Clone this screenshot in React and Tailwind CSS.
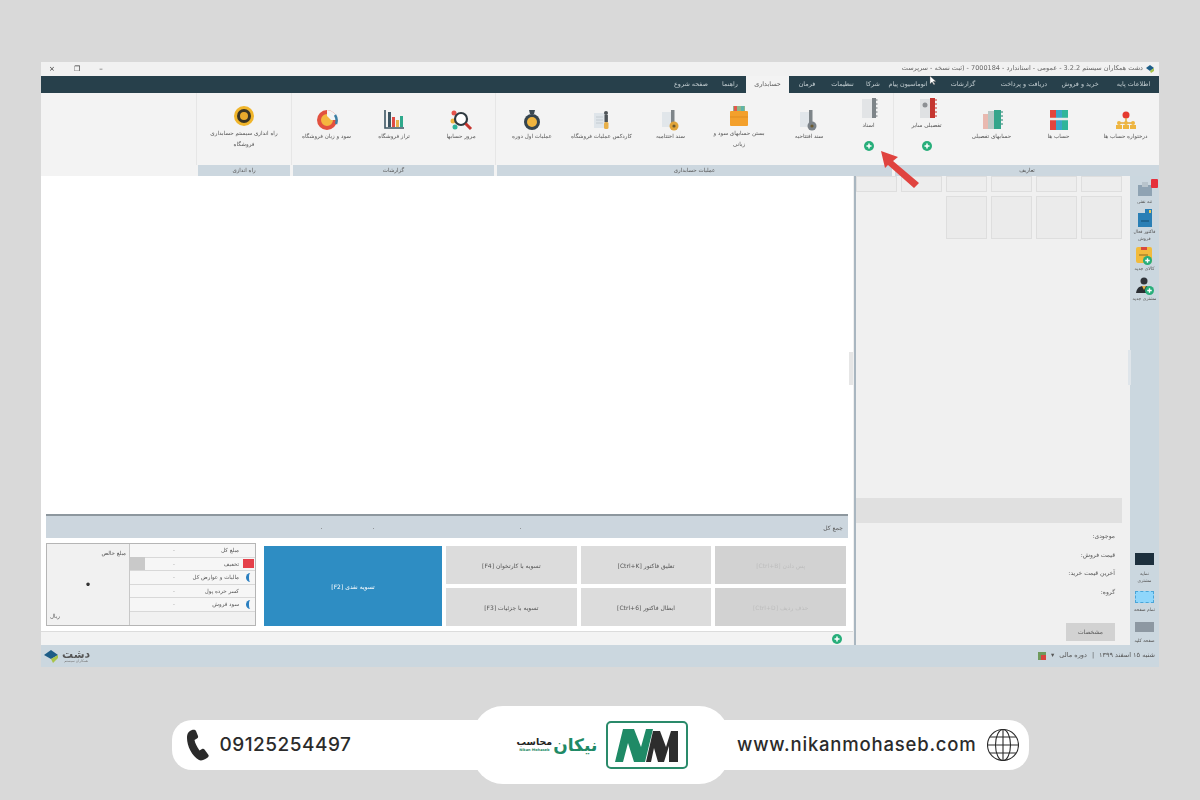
import { Fragment } from 'react';

const NAV_ITEMS = [
  { label: 'اطلاعات پایه', className: 'w-[51px]' },
  { label: 'خرید و فروش', className: 'w-[56px]' },
  { label: 'دریافت و پرداخت', className: 'w-[56px]' },
  { label: 'گزارشات', className: 'w-[66px]' },
  { label: 'اتوماسیون پیام', className: 'w-[44px]' },
  { label: 'شرکا', className: 'w-[26px]' },
  { label: 'تنظیمات', className: 'w-[35px]' },
  { label: 'فرمان', className: 'w-[36px]' },
];

const Plus = ({ className }) => (
  <svg viewBox="0 0 10 10" className={className}>
    <circle cx="5" cy="5" r="5" fill="#27ae7a" />
    <path d="M2.5 5h5M5 2.5v5" stroke="#fff" strokeWidth="1.5" />
  </svg>
);

const Svg = ({ children, w = 24, h = 22 }) => (
  <svg viewBox="0 0 24 22" width={w} height={h}>{children}</svg>
);

const OrgIcon = () => (
  <Svg>
    <circle cx="12" cy="6" r="3.5" fill="#e5392f" />
    <path d="M12 9v5M5 14h14" stroke="#e2a83c" strokeWidth="1.5" />
    <circle cx="5" cy="14" r="2" fill="#eeb540" /><circle cx="12" cy="14" r="2" fill="#eeb540" /><circle cx="19" cy="14" r="2" fill="#eeb540" />
    <rect x="2" y="16" width="6" height="4" fill="#eeb540" /><rect x="9" y="16" width="6" height="4" fill="#eeb540" /><rect x="16" y="16" width="6" height="4" fill="#eeb540" />
  </Svg>
);
const BindersIcon = () => (
  <Svg>
    <rect x="3" y="1" width="6" height="20" fill="#e2443d" /><rect x="9" y="1" width="6" height="20" fill="#3aa7c9" /><rect x="15" y="1" width="6" height="20" fill="#2fb59a" />
    <path d="M3 10h18" stroke="#eaeaea" strokeWidth="2.5" />
  </Svg>
);
const DetailIcon = () => (
  <Svg>
    <rect x="3" y="5" width="6" height="15" fill="#e9b9b0" /><rect x="8" y="2" width="7" height="18" fill="#b9c9c6" /><rect x="14" y="1" width="7" height="19" fill="#35a58b" />
    <path d="M21 3h2M21 7h2M21 11h2M21 15h2" stroke="#1f7f6a" strokeWidth="1.2" />
  </Svg>
);
const LedgerIcon = () => (
  <Svg>
    <rect x="5" y="1" width="11" height="19" fill="#dfe1e3" /><circle cx="10" cy="7" r="2.5" fill="#8d9094" />
    <rect x="15" y="0" width="5" height="20" fill="#c5352f" />
    <path d="M20 2h2M20 6h2M20 10h2M20 14h2M20 18h2" stroke="#c5352f" strokeWidth="1.2" />
  </Svg>
);
const DocsIcon = () => (
  <Svg>
    <rect x="5" y="1" width="10" height="19" fill="#e2e4e6" /><rect x="15" y="0" width="4" height="20" fill="#7d8488" />
    <path d="M19 2h1.5M19 6h1.5M19 10h1.5M19 14h1.5M19 18h1.5" stroke="#6d7478" strokeWidth="1.2" />
  </Svg>
);
const ThermoIcon = ({ color }) => (
  <Svg>
    <rect x="3" y="3" width="10" height="15" fill="#e1e6ea" /><rect x="12" y="1" width="3.5" height="15" fill="#7e8589" />
    <circle cx="15" cy="17" r="4.5" fill={color} /><circle cx="15" cy="17" r="1.6" fill="#6b5a30" />
  </Svg>
);
const BoxIcon = () => (
  <Svg>
    <rect x="6" y="1" width="12" height="7" fill="#8fb68a" /><rect x="7" y="1" width="3" height="5" fill="#e2584c" /><rect x="14" y="1" width="3" height="5" fill="#5fb4a8" />
    <rect x="3" y="6" width="18" height="15" rx="1" fill="#f3a02c" />
    <path d="M3 12h18" stroke="#df8d20" />
  </Svg>
);
const PersonDocIcon = () => (
  <Svg>
    <rect x="4" y="4" width="11" height="15" fill="#dfe5ea" />
    <path d="M6 8h7M6 11h7M6 14h7" stroke="#c4ccd2" />
    <circle cx="16" cy="4" r="2" fill="#4d5357" /><rect x="14.5" y="6" width="3.4" height="7" fill="#4d5357" /><rect x="14" y="13" width="4.5" height="7" rx="1.5" fill="#e8b04a" />
  </Svg>
);
const MedalIcon = () => (
  <Svg>
    <path d="M9 1h6l-1 4h-4z" fill="#3c4a54" />
    <circle cx="12" cy="13" r="8" fill="#35444e" /><circle cx="12" cy="13" r="5" fill="#efb43f" />
  </Svg>
);
const SearchIcon = () => (
  <Svg>
    <circle cx="5" cy="4" r="2.5" fill="#e5534b" /><circle cx="4" cy="12" r="2.5" fill="#efb43f" /><circle cx="6" cy="18" r="2.5" fill="#2fb59a" />
    <circle cx="12" cy="10" r="6" fill="#fff" stroke="#2f3a40" strokeWidth="2.2" />
    <path d="M16.5 14.5 22 20" stroke="#c5352f" strokeWidth="3" />
  </Svg>
);
const BarsIcon = () => (
  <Svg>
    <path d="M3 1v18h19" stroke="#3d5663" strokeWidth="1.6" fill="none" />
    <rect x="6" y="3" width="3" height="15" fill="#3d5663" /><rect x="10" y="8" width="3" height="10" fill="#df4a44" /><rect x="14" y="11" width="3" height="7" fill="#e8b04a" /><rect x="18" y="7" width="3" height="11" fill="#2fa98c" />
  </Svg>
);
const DonutIcon = () => (
  <Svg>
    <circle cx="12" cy="11" r="8" fill="#f4b63f" stroke="#e2513f" strokeWidth="4" />
    <path d="M12 1a10 10 0 0 1 10 10h-6l-4-4z" fill="#f4f4f4" />
    <path d="M20 6a10 10 0 0 1 1 9" stroke="#3c7ea3" strokeWidth="2.5" fill="none" />
  </Svg>
);
const GearIcon = () => (
  <Svg>
    <circle cx="12" cy="11" r="10" fill="#f0b52b" /><circle cx="12" cy="11" r="7" fill="#3a3424" /><circle cx="12" cy="11" r="4" fill="#e8a92d" />
  </Svg>
);

const GROUPS = [
  {
    title: 'تعاریف', className: 'w-[264px]',
    items: [
      { label: 'درختواره حساب ها', Icon: OrgIcon, className: 'w-[67px] pt-[16px]' },
      { label: 'حساب ها', Icon: BindersIcon, className: 'w-[67px] pt-[16px]' },
      { label: 'حسابهای تفصیلی', Icon: DetailIcon, className: 'w-[67px] pt-[16px]' },
      { label: 'تفصیلی سایر', Icon: LedgerIcon, plus: true, className: 'w-[63px] pt-[5px]' },
    ],
  },
  {
    title: 'عملیات حسابداری', className: 'w-[395px]',
    items: [
      { label: 'اسناد', Icon: DocsIcon, plus: true, className: 'w-[47px] pt-[5px]' },
      { label: 'سند افتتاحیه', Icon: () => <ThermoIcon color="#7b8288" />, className: 'w-[72px] pt-[16px]' },
      { label: 'بستن حسابهای سود و زیانی', Icon: BoxIcon, className: 'w-[68px] pt-[12px]', labelClass: 'max-w-[56px] leading-[11px]' },
      { label: 'سند اختتامیه', Icon: () => <ThermoIcon color="#e0a43a" />, className: 'w-[69px] pt-[16px]' },
      { label: 'کاردکس عملیات فروشگاه', Icon: PersonDocIcon, className: 'w-[69px] pt-[16px]' },
      { label: 'عملیات اول دوره', Icon: MedalIcon, className: 'w-[70px] pt-[16px]' },
    ],
  },
  {
    title: 'گزارشات', className: 'w-[201px]',
    items: [
      { label: 'مرور حسابها', Icon: SearchIcon, className: 'w-[66px] pt-[16px]' },
      { label: 'تراز فروشگاه', Icon: BarsIcon, className: 'w-[68px] pt-[16px]' },
      { label: 'سود و زیان فروشگاه', Icon: DonutIcon, className: 'w-[67px] pt-[16px]' },
    ],
  },
  {
    title: 'راه اندازی', className: 'w-[92px]',
    items: [
      { label: 'راه اندازی سیستم حسابداری فروشگاه', Icon: GearIcon, className: 'w-[92px] pt-[12px]', labelClass: 'max-w-[76px] leading-[11px]' },
    ],
  },
];

function RibbonGroup({ group }) {
  return (
    <div className={`flex flex-col ${group.className}`}>
      <div className="flex h-[72px]">
        {group.items.map(({ label, Icon, plus, className, labelClass = 'leading-[9px]' }) => (
          <div key={label} className={`relative flex flex-col items-center ${className}`}>
            <Icon />
            <div className={`mt-[1px] px-[1px] text-center text-[5.6px] text-[#555] ${labelClass}`}>{label}</div>
            {plus && <Plus className="absolute top-[48px] h-[10px] w-[10px]" />}
          </div>
        ))}
      </div>
      <div className="flex h-[11px] items-center justify-center bg-[#ccd7df] text-[5.5px] text-[#555]">{group.title}</div>
    </div>
  );
}

const SUMMARY_ROWS = [
  { label: 'مبلغ کل' },
  { label: 'تخفیف', mark: 'red' },
  { label: 'مالیات و عوارض کل', mark: 'blue' },
  { label: 'کسر خرده پول' },
  { label: 'سود فروش', mark: 'blue' },
];

function SummaryBox() {
  return (
    <div dir="rtl" className="flex h-[83px] w-[210px] border border-[#b5b5b5] bg-[#f1f1f1]">
      <div className="flex w-[126px] flex-col border-l border-[#c8c8c8]">
        {SUMMARY_ROWS.map((row) => (
          <div key={row.label} className="flex h-[13.5px] items-center border-b border-[#d8d8d8] bg-white/40 text-[5.5px] text-[#555]">
            <div className="flex w-[13px] justify-center">
              {row.mark === 'red' && <span className="h-[9px] w-[11px] bg-[#e5404a]" />}
              {row.mark === 'blue' && <span className="h-[9px] w-[5px] rounded-l-full border-l-[3px] border-[#2a7fc0]" />}
            </div>
            <div className="w-[55px] truncate pr-[3px] text-right">{row.label}</div>
            <div className="w-[26px] text-center text-[#333]">۰</div>
            {row.mark === 'red' && <div className="mr-auto h-[13px] w-[15px] bg-[#c9c9c9]" />}
          </div>
        ))}
      </div>
      <div className="flex flex-1 flex-col justify-between px-[3px] py-[5px] text-[5.5px] text-[#555]">
        <div>مبلغ خالص</div>
        <div className="text-center text-[12px] leading-none text-[#333]">•</div>
        <div className="text-left">ریال</div>
      </div>
    </div>
  );
}

const ACTIONS = [
  { label: 'تسویه با کارتخوان [F4]' },
  { label: 'تعلیق فاکتور [Ctrl+K]' },
  { label: 'پس دادن [Ctrl+B]', faint: true },
  { label: 'تسویه با جزئیات [F3]' },
  { label: 'ابطال فاکتور [Ctrl+6]' },
  { label: 'حذف ردیف [Ctrl+D]', faint: true },
];

function ActionsPanel() {
  return (
    <div className="mt-[5px] flex h-[84px] px-[5px]">
      <SummaryBox />
      <div dir="rtl" className="ml-[8px] flex flex-1 flex-row-reverse gap-[4px] pb-[1px] pt-[3px]">
        <div className="flex w-[178px] items-center justify-center bg-[#2e8dc3] text-[6px] text-white">تسویه نقدی [F2]</div>
        <div dir="ltr" className="grid flex-1 grid-cols-3 grid-rows-2 gap-[4px] pr-[2px]">
          {ACTIONS.map((action) => (
            <div
              key={action.label}
              dir="rtl"
              className={action.faint
                ? 'flex items-center justify-center bg-[#d2d2d2] text-[6px] text-[#bdbdbd]'
                : 'flex items-center justify-center bg-[#dcdcdc] text-[6px] text-[#555]'}
            >
              {action.label}
            </div>
          ))}
        </div>
      </div>
    </div>
  );
}

function LeftPane() {
  return (
    <div className="flex w-[812px] flex-col bg-white">
      <div className="relative flex-1">
        <div className="absolute right-[0px] top-[176px] h-[33px] w-[4px] bg-[#e6e6e6]" />
      </div>
      <div dir="rtl" className="mx-[5px] flex h-[24px] items-center border-t-2 border-[#8d979e] bg-[#ccd6de] px-[5px] text-[6px] text-[#555]">
        <span className="w-[321px]">جمع کل</span>
        <span className="w-[147px]">۰</span>
        <span className="w-[52px]">۰</span>
        <span>۰</span>
      </div>
      <ActionsPanel />
      <div className="mt-[4px] flex h-[14px] items-center justify-end border-t border-[#dcdcdc] bg-[#f3f3f3] pr-[11px]">
        <Plus className="h-[10px] w-[10px]" />
      </div>
    </div>
  );
}

function RightPane() {
  const topCells = [0, 1, 2, 3, 4, 5];
  return (
    <div className="relative flex w-[274px] flex-col bg-[#f0f0f0] pr-[8px]">
      <div className="grid h-[16px] grid-cols-6 gap-x-[3.5px]">
        {topCells.map((cell) => (
          <div key={cell} className="border border-[#dedede] bg-[#ededed]" />
        ))}
      </div>
      <div className="mt-[4px] grid h-[43px] grid-cols-6 gap-x-[3.5px]">
        <div className="col-span-2" />
        {[0, 1, 2, 3].map((cell) => (
          <div key={cell} className="border border-[#dedede] bg-[#ebebeb]" />
        ))}
      </div>
      <div className="mt-[259px] h-[25px] bg-[#e0e0e0]" />
      <div dir="rtl" className="mt-[8px] flex flex-col gap-[9.5px] pr-[7px] text-[6px] leading-[9px] text-[#555]">
        <div>موجودی:</div>
        <div>قیمت فروش:</div>
        <div>آخرین قیمت خرید:</div>
        <div>گروه:</div>
      </div>
      <div dir="rtl" className="mt-[27px] pr-[7px]">
        <div className="flex h-[18px] w-[49px] items-center justify-center bg-[#d2d2d2] text-[6px] text-[#555]">مشخصات</div>
      </div>
      <div className="absolute -right-[1px] top-[174px] h-[35px] w-[3px] bg-[#dfe5ea]" />
    </div>
  );
}

const SideLabel = ({ children }) => (
  <div className="mt-[1px] text-center text-[4.5px] leading-[7px] text-[#555]">{children}</div>
);

function SideBar() {
  return (
    <div className="flex w-[29px] flex-col justify-between bg-[#cbd7df] pb-[1px] pt-[3px]">
      <div className="flex flex-col items-center gap-[4px]">
        <div className="relative">
          <svg viewBox="0 0 18 18" className="h-[18px] w-[18px]">
            <rect x="2" y="6" width="14" height="11" fill="#8fa3b3" /><rect x="6" y="3" width="6" height="5" fill="#b8c4cc" />
          </svg>
          <div className="absolute -right-[4px] top-[0px] h-[9px] w-[7px] rounded-[1px] bg-[#e5303c]" />
          <SideLabel>تنه نفتی</SideLabel>
        </div>
        <div>
          <svg viewBox="0 0 18 18" className="mx-auto h-[18px] w-[18px]">
            <rect x="2" y="4" width="14" height="14" fill="#2a7fb5" /><rect x="9" y="0" width="7" height="6" fill="#2a7fb5" /><rect x="13" y="1" width="2" height="3" fill="#e8c95a" /><path d="M5 12h8" stroke="#1b5d87" strokeWidth="1.5" />
          </svg>
          <SideLabel>فاکتور فعال فروش</SideLabel>
        </div>
        <div className="relative">
          <svg viewBox="0 0 18 18" className="mx-auto h-[18px] w-[18px]">
            <rect x="1" y="1" width="16" height="16" rx="2" fill="#f2bb3c" /><rect x="6" y="1" width="6" height="3" fill="#d9493c" /><path d="M4 9h9" stroke="#8a6a22" />
          </svg>
          <Plus className="absolute right-[2px] top-[10px] h-[9px] w-[9px]" />
          <SideLabel>کالای جدید</SideLabel>
        </div>
        <div className="relative">
          <svg viewBox="0 0 18 18" className="mx-auto h-[18px] w-[18px]">
            <circle cx="9" cy="5" r="3.5" fill="#30343a" /><path d="M1 17c1-6 4-7 8-7s7 1 8 7z" fill="#2a2e33" /><path d="M7 10h4l-2 4z" fill="#e8b04a" />
          </svg>
          <Plus className="absolute right-[2px] top-[10px] h-[9px] w-[9px]" />
          <SideLabel>مشتری جدید</SideLabel>
        </div>
      </div>
      <div className="flex flex-col items-center">
        <div className="h-[12px] w-[19px] bg-[#1c2f3d]" />
        <div className="mt-[4px]"><SideLabel>نمایه<br />مشتری</SideLabel></div>
        <div className="mt-[7px] h-[12px] w-[19px] border border-dashed border-[#4aa5d8] bg-[#8fd6fb]" />
        <div className="mt-[2px]"><SideLabel>تمام صفحه</SideLabel></div>
        <div className="mt-[9px] h-[10px] w-[19px] bg-[#8d98a2]" />
        <div className="mt-[4px]"><SideLabel>صفحه کلید</SideLabel></div>
      </div>
    </div>
  );
}

function AppWindow() {
  return (
    <div className="flex h-[605px] w-[1118px] flex-col bg-[#f3f3f3] blur-[0.4px]" style={{ fontFamily: '"DejaVu Sans", sans-serif' }}>
      <div className="flex h-[14px] items-center justify-between bg-[#f1f1f1] pl-[8px] pr-[5px] text-[6.5px] text-[#666]">
        <div className="flex gap-[19px] text-[7px] text-[#333]">
          <span>×</span><span>❐</span><span>–</span>
        </div>
        <div dir="rtl" className="flex items-center gap-[3px]">
          <svg viewBox="0 0 8 8" className="h-[8px] w-[8px]"><path d="M0 3 4 0l4 3-4 3z" fill="#1d5d87" /><path d="M4 6l4-3v3l-3 2z" fill="#a9c44a" /></svg>
          <span>دشت همکاران سیستم 3.2.2 - عمومی - استاندارد - 7000184 - (ثبت نسخه - سرپرست</span>
        </div>
      </div>

      <div dir="rtl" className="flex h-[17px] bg-[#27404b] text-[6.4px] text-[#c6d0d4]">
        {NAV_ITEMS.map((item) => (
          <div key={item.label} className={`flex shrink-0 items-center justify-center whitespace-nowrap ${item.className}`}>{item.label}</div>
        ))}
        <div className="flex w-[43px] items-center justify-center bg-[#f3f3f3] text-[#555]">حسابداری</div>
        <div className="flex w-[32px] items-center justify-center">راهنما</div>
        <div className="flex w-[46px] items-center justify-center">صفحه شروع</div>
      </div>

      <div dir="rtl" className="flex h-[83px] gap-px bg-[#f3f3f3]">
        {GROUPS.map((group) => (
          <Fragment key={group.title}>
            <RibbonGroup group={group} />
            <div className="h-[72px] w-px bg-[#e6e6e6]" />
          </Fragment>
        ))}
      </div>

      <div className="flex flex-1">
        <LeftPane />
        <div className="w-[3px] border-r-2 border-[#a9b6c0] bg-[#f0f0f0]" />
        <RightPane />
        <SideBar />
      </div>

      <div className="flex h-[22px] items-center justify-between bg-[#cbd7df] px-[3px]">
        <div className="flex items-center gap-[4px]">
          <svg viewBox="0 0 14 14" className="h-[14px] w-[14px]">
            <path d="M0 6 7 1l7 5-7 4z" fill="#1d5d87" /><path d="M7 10l7-4v3l-5 5z" fill="#a9c44a" />
          </svg>
          <div className="flex flex-col items-center leading-none">
            <span className="text-[11px] font-bold text-[#555]">دشت</span>
            <span className="text-[3.5px] text-[#777]">همکاران سیستم</span>
          </div>
        </div>
        <div dir="rtl" className="flex items-center gap-[5px] pr-[1px] text-[6.5px] text-[#555]">
          <span>شنبه ۱۵ اسفند ۱۳۹۹</span>
          <span>|</span>
          <span>دوره مالی</span>
          <span>▾</span>
          <svg viewBox="0 0 8 8" className="h-[8px] w-[8px]"><rect width="8" height="8" fill="#6f9a5c" /><path d="M3 3h5v5H3z" fill="#d8433f" /></svg>
        </div>
      </div>
    </div>
  );
}

function ContactBar() {
  return (
    <div className="mt-[39px] flex w-[857px] items-center text-[#2b2b2b]" style={{ fontFamily: 'Inter, sans-serif' }}>
      <div className="-mr-[6px] flex h-[50px] w-[307px] items-center gap-[10px] rounded-l-[20px] bg-white pl-[14px]">
        <svg viewBox="0 0 24 32" className="h-[32px] w-[24px]">
          <path
            fill="#2b2b2b"
            d="M6 1C3 2 1 4 1 9c0 8 5 18 12 22 2 1 5 0 8-2 1.500-1 2-2 1.500-3l-4-5.500c-.5-.8-1.500-1-2.500-.5l-2.500 1.500C11 18 9 14 8.500 11L11 9.500c1-.5 1.300-1.500 1-2.500L10 2C9.500 1 8 .5 6 1z"
          />
        </svg>
        <span className="text-[19px] font-medium tracking-[0.5px]">09125254497</span>
      </div>

      <div className="relative z-10 flex h-[78px] w-[256px] items-center gap-[9px] rounded-[30px] bg-white pl-[44px]">
        <div dir="rtl" className="flex w-[80px] items-start justify-end gap-[1px]" style={{ fontFamily: '"DejaVu Sans", sans-serif' }}>
          <span className="text-[17px] font-bold leading-[22px] text-[#1f8a66]">نیکان</span>
          <div className="flex flex-col items-center pt-[2px]">
            <span className="text-[9.5px] font-bold leading-[12px] text-[#222]">محاسب</span>
            <span dir="ltr" className="whitespace-nowrap text-[3.5px] font-bold leading-[5px] text-[#1f8a66]">Nikan Mohaseb</span>
          </div>
        </div>
        <div className="flex h-[48px] w-[82px] items-center justify-center rounded-[5px] border-2 border-[#2a8a6a]">
          <svg viewBox="0 0 64 33" className="h-[33px] w-[64px]">
            <path d="M0 33 8 0h11l7 18 5-18h7l-8 33H19l-6-19-5 19z" fill="#1f8a66" />
            <path d="M31 33 38 2h7l6 16 5-16h7v31h-9V17l-5 16h-6l-4-14-3 14z" fill="#2d2d2d" />
          </svg>
        </div>
      </div>

      <div className="-ml-[6px] flex h-[50px] w-[306px] items-center justify-end gap-[10px] rounded-r-[20px] bg-white pr-[10px]">
        <span className="text-[18.5px] font-medium tracking-[0.8px]">www.nikanmohaseb.com</span>
        <svg viewBox="0 0 32 32" fill="none" stroke="#2b2b2b" strokeWidth="1.1" className="h-[32px] w-[32px]">
          <circle cx="16" cy="16" r="15.500" />
          <ellipse cx="16" cy="16" rx="7.500" ry="15.500" />
          <path d="M16 .5v31M.5 16h31M3 8h26M3 24h26" />
        </svg>
      </div>
    </div>
  );
}

export default function App() {
  return (
    <div className="relative flex h-[800px] w-[1200px] flex-col items-center overflow-hidden bg-[#d9d9d9] pt-[62px]">
      <AppWindow />
      <ContactBar />
      {/* arrow and pointer lie over the window */}
      <svg viewBox="0 0 40 40" className="absolute left-[880px] top-[150px] h-[40px] w-[40px]">
        <path d="M1 1 18 7l-5 4 26 22-5 5L8 15l-3 3z" fill="#e0433f" />
      </svg>
      <svg viewBox="0 0 8 10" className="absolute left-[929px] top-[76px] h-[10px] w-[8px]">
        <path d="M1 0v8l2-2 2 3 1-1-2-2.500h3z" fill="#fff" stroke="#555" strokeWidth=".4" />
      </svg>
    </div>
  );
}
